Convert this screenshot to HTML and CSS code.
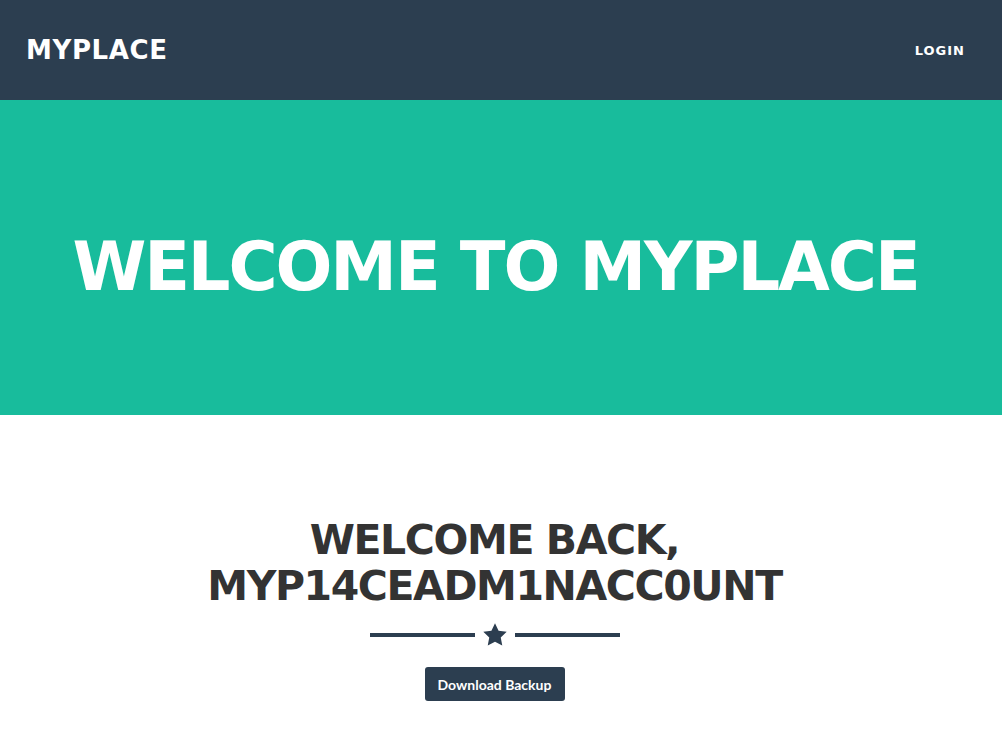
FILE: index.html
```html
<!DOCTYPE html>
<html>
<head>
<meta charset="utf-8">
<link rel="stylesheet" href="styles.css">
</head>
<body>
<nav class="navbar">
  <a class="brand" href="#">MYPLACE</a>
  <a class="nav-link" href="#">LOGIN</a>
</nav>
<header class="hero">
  <h1 class="hero-title">WELCOME TO MYPLACE</h1>
</header>
<section class="content">
  <h2 class="welcome">WELCOME BACK,<br>MYP14CEADM1NACC0UNT</h2>
  <div class="divider">
    <span class="line"></span>
    <svg class="star" viewBox="0 0 24 24" width="26" height="26"><path d="M12 1.2l3.3 6.9 7.5 1-5.5 5.2 1.4 7.5L12 18.2l-6.7 3.6 1.4-7.5L1.2 9.1l7.5-1z" fill="#2c3e50"/></svg>
    <span class="line"></span>
  </div>
  <button class="btn">Download Backup</button>
</section>
</body>
</html>
```
FILE: styles.css
```css
html, body { margin: 0; padding: 0; background: #fff; }
body { font-family: "DejaVu Sans", sans-serif; }
.navbar {
  height: 100px;
  background: #2c3e50;
  display: flex;
  align-items: center;
  justify-content: space-between;
  padding: 0 37px 0 26px;
}
.brand {
  color: #fff;
  text-decoration: none;
  font-weight: 700;
  font-size: 26px;
  letter-spacing: 0.6px;
}
.nav-link {
  color: #fff;
  text-decoration: none;
  font-weight: 700;
  font-size: 13px;
  letter-spacing: 1px;
}
.hero {
  height: 315px;
  box-sizing: border-box;
  padding: 20px 11px 0 0;
  background: #18bc9c;
  display: flex;
  align-items: center;
  justify-content: center;
}
.hero-title {
  margin: 0;
  color: #fff;
  font-size: 67px;
  font-weight: 700;
  line-height: 1;
  letter-spacing: -2.1px;
}
.content {
  display: flex;
  flex-direction: column;
  align-items: center;
  padding: 102px 13px 0 0;
}
.welcome {
  margin: 0;
  text-align: center;
  color: #333;
  font-size: 41px;
  line-height: 46px;
  font-weight: 700;
  letter-spacing: -1.4px;
}
.divider {
  display: flex;
  align-items: center;
  gap: 7px;
  margin-top: 13px;
}
.line { width: 105px; height: 4px; background: #2c3e50; }
.star { display: block; }
.btn {
  margin-top: 19px;
  background: #2c3e50;
  color: #fff;
  border: none;
  border-radius: 3px;
  font-family: "Lato", sans-serif;
  font-weight: 700;
  font-size: 14px;
  width: 140px;
  height: 34px;
  padding: 0;
}
```
